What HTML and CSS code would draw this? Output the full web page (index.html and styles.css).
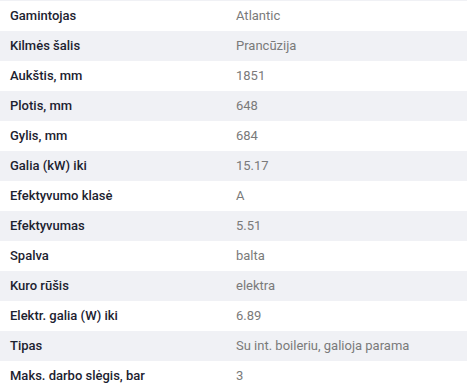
FILE: index.html
```html
<!DOCTYPE html>
<html lang="lt">
<head>
<meta charset="utf-8">
<link rel="stylesheet" href="styles.css">
</head>
<body>
<table class="specs">
<tbody>
<tr><th>Gamintojas</th><td>Atlantic</td></tr>
<tr><th>Kilmės šalis</th><td>Prancūzija</td></tr>
<tr><th>Aukštis, mm</th><td>1851</td></tr>
<tr><th>Plotis, mm</th><td>648</td></tr>
<tr><th>Gylis, mm</th><td>684</td></tr>
<tr><th>Galia (kW) iki</th><td>15.17</td></tr>
<tr><th>Efektyvumo klasė</th><td>A</td></tr>
<tr><th>Efektyvumas</th><td>5.51</td></tr>
<tr><th>Spalva</th><td>balta</td></tr>
<tr><th>Kuro rūšis</th><td>elektra</td></tr>
<tr><th>Elektr. galia (W) iki</th><td>6.89</td></tr>
<tr><th>Tipas</th><td>Su int. boileriu, galioja parama</td></tr>
<tr><th>Maks. darbo slėgis, bar</th><td>3</td></tr>
</tbody>
</table>
</body>
</html>
```
FILE: styles.css
```css
html, body {
  margin: 0;
  padding: 0;
  background: #fff;
}
.specs {
  width: 467px;
  border-collapse: collapse;
  border-top: 1px solid #f0f1f5;
  font-family: Roboto, "Liberation Sans", sans-serif;
  font-size: 13px;
}
.specs tr:nth-child(even) {
  background: #f0f1f5;
}
.specs th,
.specs td {
  height: 30px;
  padding: 0 0 0 10px;
  text-align: left;
  vertical-align: middle;
  line-height: 16px;
  box-sizing: border-box;
}
.specs th {
  width: 226px;
  font-weight: 500;
  color: #1c2230;
}
.specs td {
  color: #7a7a7a;
  font-weight: 400;
}
```
